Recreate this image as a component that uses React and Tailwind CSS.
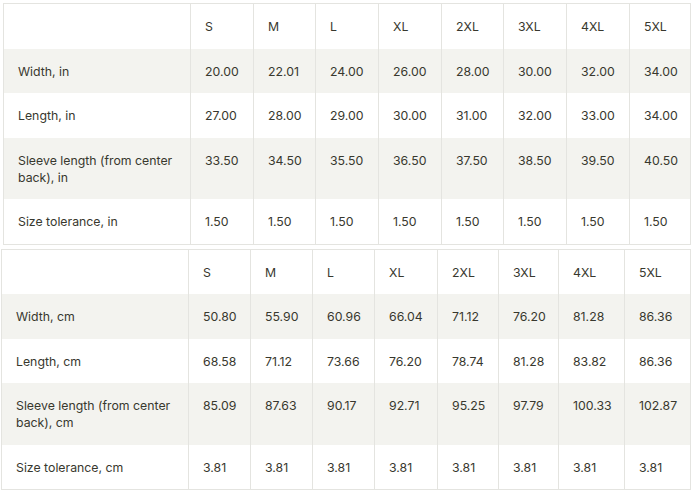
import React from 'react';

const sizes = ['S', 'M', 'L', 'XL', '2XL', '3XL', '4XL', '5XL'];

const inches = [
  { label: 'Width, in', values: ['20.00', '22.01', '24.00', '26.00', '28.00', '30.00', '32.00', '34.00'] },
  { label: 'Length, in', values: ['27.00', '28.00', '29.00', '30.00', '31.00', '32.00', '33.00', '34.00'] },
  { label: 'Sleeve length (from center back), in', values: ['33.50', '34.50', '35.50', '36.50', '37.50', '38.50', '39.50', '40.50'] },
  { label: 'Size tolerance, in', values: ['1.50', '1.50', '1.50', '1.50', '1.50', '1.50', '1.50', '1.50'] },
];

const cms = [
  { label: 'Width, cm', values: ['50.80', '55.90', '60.96', '66.04', '71.12', '76.20', '81.28', '86.36'] },
  { label: 'Length, cm', values: ['68.58', '71.12', '73.66', '76.20', '78.74', '81.28', '83.82', '86.36'] },
  { label: 'Sleeve length (from center back), cm', values: ['85.09', '87.63', '90.17', '92.71', '95.25', '97.79', '100.33', '102.87'] },
  { label: 'Size tolerance, cm', values: ['3.81', '3.81', '3.81', '3.81', '3.81', '3.81', '3.81', '3.81'] },
];

const cell = 'pl-[14px] pr-[10px] pt-[14px] pb-[13.5px] text-left align-top border-r border-[#e4e4e0]';

const SizeTable = ({ rows, widths, className }) => (
  <table className={`table-fixed border-collapse border border-[#e4e4e0] ${className}`}>
    <colgroup>
      {widths.map((w, i) => (
        <col key={i} style={{ width: w }} />
      ))}
    </colgroup>
    <thead>
      <tr className="bg-white">
        <th className="border-r border-[#e4e4e0]" />
        {sizes.map(s => (
          <th key={s} className={`${cell} font-normal`}>{s}</th>
        ))}
      </tr>
    </thead>
    <tbody>
      {rows.map((row, i) => (
        <tr key={row.label} className={i % 2 === 0 ? 'bg-[#f3f3ef]' : 'bg-white'}>
          <td className={cell}>{row.label}</td>
          {row.values.map((v, j) => (
            <td key={j} className={cell}>{v}</td>
          ))}
        </tr>
      ))}
    </tbody>
  </table>
);

export default function App() {
  return (
    <div className="w-[691px] h-[492px] overflow-hidden bg-white text-[12.3px] leading-[17px] text-[#38382e] font-['Inter',sans-serif]">
      <SizeTable
        rows={inches}
        widths={[187, 63, 62, 63, 63, 62, 63, 63, 61]}
        className="w-[687px] ml-[3px] mt-[3px]"
      />
      <SizeTable
        rows={cms}
        widths={[187, 62, 62, 62, 63, 61, 60, 66, 66]}
        className="w-[689px] ml-[1px] mt-[4px]"
      />
    </div>
  );
}
